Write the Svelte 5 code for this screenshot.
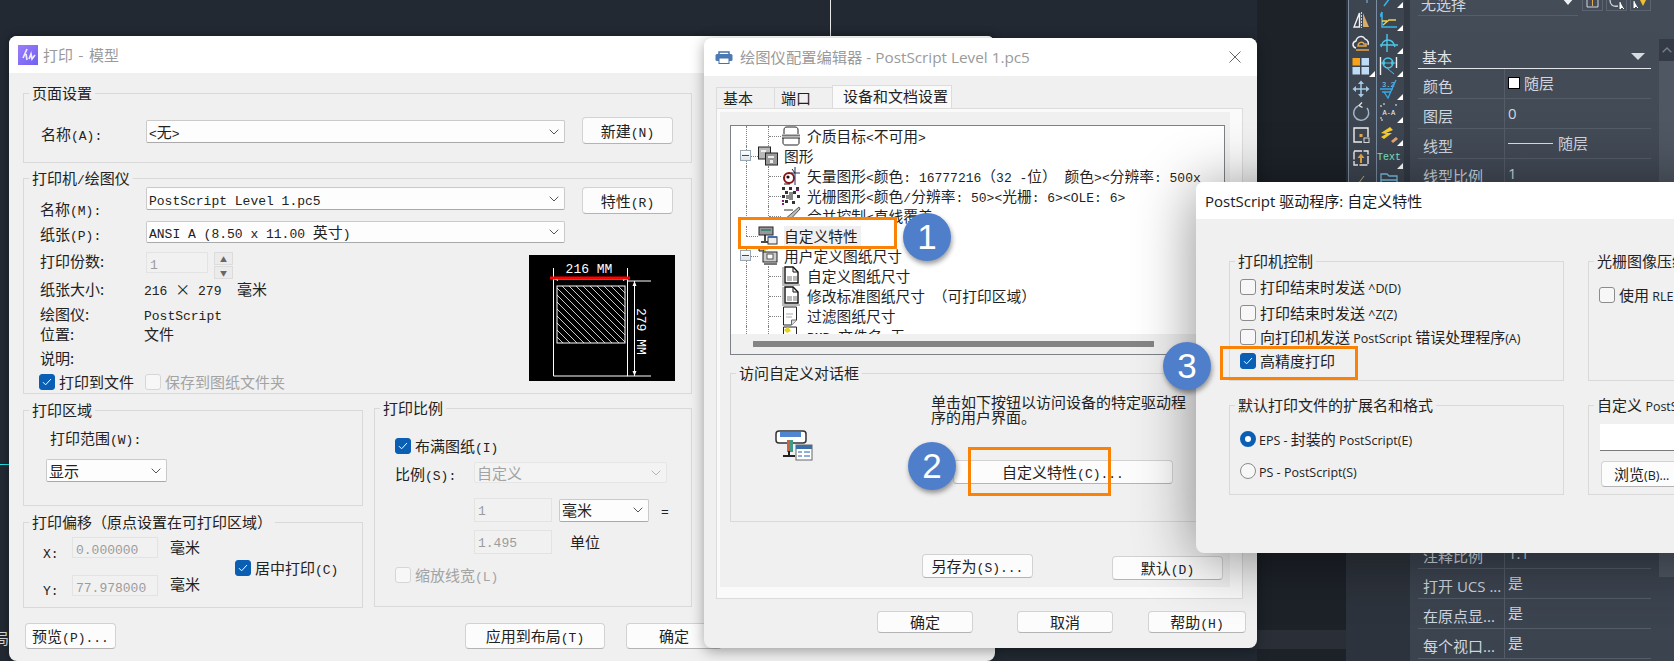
<script>
	const treeRows = [
		{ level: 2, icon: 'media', text: '介质目标<不可用>' },
		{ level: 1, icon: 'graphics', text: '图形', box: true },
		{ level: 2, icon: 'vector', text: '矢量图形<颜色: 16777216（32 -位） 颜色><分辨率: 500x' },
		{ level: 2, icon: 'raster', text: '光栅图形<颜色/分辨率: 50><光栅: 6><OLE: 6>' },
		{ level: 2, icon: 'merge', text: '合并控制<直线覆盖>' },
		{ level: 1, icon: 'custom', text: '自定义特性', current: true },
		{ level: 1, icon: 'userpaper', text: '用户定义图纸尺寸', box: true },
		{ level: 2, icon: 'page', text: '自定义图纸尺寸' },
		{ level: 2, icon: 'page', text: '修改标准图纸尺寸 （可打印区域）' },
		{ level: 2, icon: 'filter', text: '过滤图纸尺寸' },
		{ level: 2, icon: 'pmp', text: 'PMP 文件名<无>' }
	];

	const topProps = [
		{ name: '图层', value: '0' },
		{ name: '线型', value: '随层', line: true },
		{ name: '线型比例', value: '1' }
	];
	const lowerProps = [
		{ name: '注释比例', value: '1:1' },
		{ name: '打开 UCS ...', value: '是' },
		{ name: '在原点显...', value: '是' },
		{ name: '每个视口...', value: '是' }
	];

	const runs = (s) => s.match(/[\x20-\x7e]+|[^\x20-\x7e]+/g) ?? [];
	const isLatin = (r) => /^[\x20-\x7e]/.test(r);
</script>

{#snippet t(s, cls = 'm')}{#each runs(s) as r}{#if isLatin(r)}<span class={cls}>{r}</span>{:else}{r}{/if}{/each}{/snippet}

{#snippet chevron()}
	<svg class="chev" width="10" height="6" viewBox="0 0 10 6"><path d="M.7.7 5 5 9.3.7" fill="none" stroke="currentColor" /></svg>
{/snippet}

{#snippet check(label, state, cls = 'm')}
	<span class="check" class:dim={state === 'off-dim'}>
		<span class="box" class:on={state === 'on'} class:boxdim={state === 'off-dim'}>
			{#if state === 'on'}
				<svg width="10" height="8" viewBox="0 0 10 8"><path d="M1 4.2 3.6 6.8 9 1" fill="none" stroke="#fff" /></svg>
			{/if}
		</span>
		<span>{@render t(label, cls)}</span>
	</span>
{/snippet}

{#snippet treeIcon(name)}
	<svg width="20" height="20" viewBox="0 0 20 20">
		{#if name === 'media'}
			<path d="M3 8V4c0-2 1-3 3-3h8c2 0 3 1 3 3v4" fill="#fff" stroke="#222" />
			<path d="M1 9.500h18" stroke="#777" stroke-width="2" />
			<path d="M1 12h18M2 12v5c0 1 1 2 2 2h12c1 0 2-1 2-2v-5" fill="#fff" stroke="#222" />
		{:else if name === 'graphics'}
			<rect x="0.500" y="1" width="12" height="12" fill="#b8b8b8" stroke="#222" />
			<rect x="7.500" y="7" width="12" height="12" fill="#999" stroke="#222" />
			<path d="M3 4h5v2H3zM10 10h6v2h-6zM12 14h3v3h-3z" fill="#eee" />
		{:else if name === 'vector'}
			<circle cx="8" cy="12" r="5" fill="#fff" stroke="#8a1414" stroke-width="2" />
			<circle cx="7" cy="11" r="1.600" fill="#111" />
			<path d="M14 1v18M10 7h9" stroke="#1c2a6a" />
			<path d="M11 3l3 4M3 18l6 0" stroke="#222" />
		{:else if name === 'raster'}
			<path d="M1 1h3v3H1zM8 1h3v3H8zM15 1h3v3h-3zM4 5h3v3H4zM12 5h3v3h-3zM1 9h3v3H1zM16 9h3v3h-3zM4 14h3v3H4zM11 15h3v3h-3z" fill="#333" />
			<path d="M8 6h4v8H8zM5 9h3v4H5z" fill="#888" />
			<path d="M1 14h2v2H1zM15 3h3v2h-3zM1 17h2v2H1z" fill="#7c1a7c" />
		{:else if name === 'merge'}
			<path d="M18 1 3 14l-1 5 4-2L19 3z" fill="#bbb" stroke="#555" />
			<path d="M3 4h9" stroke="#333" />
		{:else if name === 'custom'}
			<rect x="1" y="1" width="14" height="8" fill="#999" stroke="#222" />
			<path d="M3 4h10" stroke="#2b7f70" stroke-width="1.500" />
			<path d="M7 9v6M3 16h9" stroke="#111" stroke-width="1.500" />
			<rect x="10" y="11" width="9" height="7" fill="#eee" stroke="#333" />
			<path d="M10 11h9" stroke="#2d63b8" stroke-width="1.500" />
		{:else if name === 'userpaper'}
			<path d="M1 2h5v3H1z" fill="#bbb" stroke="#222" />
			<path d="M7 1v5M5 3h5" stroke="#e0c91c" stroke-width="1.500" />
			<rect x="5" y="6" width="14" height="10" fill="#ccc" stroke="#222" />
			<rect x="9" y="8" width="6" height="5" fill="#fff" stroke="#555" />
			<path d="M6 18h13" stroke="#777" stroke-width="2" />
		{:else if name === 'page'}
			<path d="M1 1h2v19H1zM1 18h18v2H1z" fill="#bbb" />
			<path d="M4 1h8l5 5v11H4z" fill="#fff" stroke="#111" stroke-width="1.400" />
			<path d="M6 10h5v5H6zM12 10h4v5h-4z" fill="#bbb" />
			<path d="M12 1v5h5" fill="none" stroke="#111" />
		{:else if name === 'filter'}
			<path d="M2.500 1h13v13l-5 5h-8z" fill="#fff" stroke="#222" />
			<path d="M5 8h7M5 11h6" stroke="#aaa" />
			<path d="M15.500 14h-5v5" fill="#ddd" stroke="#666" />
		{:else}
			<path d="M2.500 1h13v18h-13z" fill="#fff" stroke="#222" />
			<path d="M3 4l4-3 3 4-4 2z" fill="#e8d21c" />
		{/if}
	</svg>
{/snippet}

<div class="desk">
	<div class="canvas">
		<i class="axis-v"></i>
		<i class="axis-h"></i>
		<span class="cut-text">局1</span>
		<i class="canvas-strip"></i>
	</div>

	<div class="rail">
		<div class="toolbars">
			<div class="tool-col">
				<div class="tool"><svg width="20" height="20" viewBox="0 0 20 20"><path d="M2 8h14" stroke="#7fc4ee" stroke-width="1.500" /><path d="M3 3h13v13" fill="none" stroke="#7fc4ee" /></svg></div>
				<div class="tool"><svg width="20" height="20" viewBox="0 0 20 20"><path d="M8.500 3 3 17h5.500z" fill="none" stroke="#f1f1f1" stroke-width="1.400" /><path d="M10.500 2v16" stroke="#cfd5dc" stroke-dasharray="2 1" /><path d="M12 3l6 14h-6z" fill="#d8ab68" /></svg></div>
				<div class="tool"><svg width="20" height="20" viewBox="0 0 20 20"><path d="M5 15c-4-1-4-6 0-7 1-5 7-6 9-2 3 1 4 4 3 6" fill="none" stroke="#f1f1f1" stroke-width="1.500" /><path d="M7 13c0-4 5-5 6-2h2v2H7zM5 17h13" fill="none" stroke="#e5a748" stroke-width="1.500" /></svg></div>
				<div class="tool mark"><svg width="20" height="20" viewBox="0 0 20 20"><rect x="1.500" y="2" width="7.500" height="7.500" fill="#f7a21b" /><rect x="10.500" y="2" width="7.500" height="7.500" fill="#bfdcf7" /><rect x="1.500" y="11" width="7.500" height="7.500" fill="#bfdcf7" /><rect x="10.500" y="11" width="7.500" height="7.500" fill="#bfdcf7" /></svg></div>
				<div class="tool"><svg width="20" height="20" viewBox="0 0 20 20"><path d="M10 3v14M3 10h14" stroke="#a5cbe6" stroke-width="1.500" /><path d="M7 5l3-3.500L13 5zM7 15l3 3.500 3-3.500zM5 7l-3.500 3L5 13zM15 7l3.500 3-3.500 3z" fill="#a5cbe6" /></svg></div>
				<div class="tool"><svg width="20" height="20" viewBox="0 0 20 20"><path d="M7 4a7.500 7.500 0 1 0 9 2" fill="none" stroke="#a3b6c8" stroke-width="1.500" /><path d="M11 .5 8 3.500l3.500 2" fill="none" stroke="#dce4ea" stroke-width="1.400" /></svg></div>
				<div class="tool"><svg width="20" height="20" viewBox="0 0 20 20"><path d="M11 17H3V3h14v9" fill="none" stroke="#f1f1f1" stroke-width="1.400" /><rect x="8.500" y="9" width="3" height="3" fill="#e7a94a" /><rect x="13" y="13" width="5" height="4.500" fill="none" stroke="#ddd" /></svg></div>
				<div class="tool"><svg width="20" height="20" viewBox="0 0 20 20"><path d="M3 3h14v14H3z" fill="none" stroke="#f1f1f1" stroke-width="1.400" stroke-dasharray="8 1.500" /><path d="M10 15V9" stroke="#e7a94a" stroke-width="2" /><path d="M6.500 10 10 5.500l3.500 4.500z" fill="#e7a94a" /></svg></div>
				<div class="tool"><svg width="20" height="20" viewBox="0 0 20 20"><path d="M1 13h5" stroke="#b9c3ce" stroke-dasharray="1 1" /><path d="M7 13l6-8M8 13h10" stroke="#c9b48a" /></svg></div>
			</div>
			<div class="tool-col">
				<div class="tool mark"><svg width="20" height="20" viewBox="0 0 20 20"><path d="M5 19 16 4" stroke="#39b5ea" stroke-width="1.500" /></svg></div>
				<div class="tool mark"><svg width="20" height="20" viewBox="0 0 20 20"><path d="M3 2v15h15M3 6H1M3 2 1.500 5" fill="none" stroke="#39b5ea" stroke-width="1.500" /><path d="M4 15l6-5h7M3 11h5" fill="none" stroke="#ecd24e" stroke-width="1.300" /></svg></div>
				<div class="tool mark"><svg width="20" height="20" viewBox="0 0 20 20"><path d="M8 1v18M1 12h18" stroke="#4cc6e8" stroke-width="1.400" /><path d="M2 14C3 9 6 7 9 7c4 0 6 3 7 7" fill="none" stroke="#4cc6e8" stroke-width="1.300" /></svg></div>
				<div class="tool mark"><svg width="20" height="20" viewBox="0 0 20 20"><path d="M1.500 1v18M17.500 1v11" stroke="#f1f1f1" stroke-width="1.400" /><circle cx="9" cy="7" r="5" fill="none" stroke="#4cc6e8" stroke-width="1.400" /><path d="M2 7h15M6 10.500l9 7.500" stroke="#4cc6e8" /><path d="M6 5v4l-3-2zM12 5v4l3-2z" fill="#4cc6e8" /></svg></div>
				<div class="tool mark"><svg width="20" height="20" viewBox="0 0 20 20"><text x="3" y="8" class="tiny" fill="#7fd0f2">3.2</text><path d="M1 10h13M3 13h9M5 13l4 6 8-18" fill="none" stroke="#35a9ea" stroke-width="1.300" /></svg></div>
				<div class="tool mark"><svg width="20" height="20" viewBox="0 0 20 20"><text x="3.500" y="12.500" class="tiny" fill="#f1f1f1">A-A</text><path d="M4 2h3M2 5V2M2 15v3h3M17 2v3" fill="none" stroke="#f1f1f1" stroke-dasharray="2 1" /></svg></div>
				<div class="tool mark"><svg width="20" height="20" viewBox="0 0 20 20"><path d="M2 8 11 2l3 3-7 3 6 0-8 6-3-2 5-3z" fill="#f4cc2e" /><path d="M12 16l5-4 2 2-5 4z" fill="#e6a46a" /></svg></div>
				<div class="tool mark"><span class="tool-text">Text</span></div>
				<div class="tool"><svg width="20" height="20" viewBox="0 0 20 20"><path d="M2 8V3h6l2 2h8v14H2zM2 9h16M6 13h8v6H6z" fill="none" stroke="#7cc2e8" stroke-width="1.300" /></svg></div>
			</div>
			<i class="toolbar-gap"></i>
		</div>
	</div>

	<div class="panel">
		<div class="props">
			<div class="sel-row">
				<div class="sel-box">
					<span>无选择</span>
					<svg width="12" height="7" viewBox="0 0 12 7"><path d="M0 0h12L6 7z" fill="#eef1f4" /></svg>
				</div>
				<span class="sel-btn"><svg width="19" height="10" viewBox="0 0 19 10"><path d="M4 0v7h11V0M9.500 0v6" fill="none" stroke="#cfd6df" /><path d="M9.500 0v6" stroke="#e7a94a" /></svg></span>
				<span class="sel-btn"><svg width="19" height="10" viewBox="0 0 19 10"><path d="M3 0c0 5 3 7 8 6" fill="none" stroke="#cfd6df" stroke-width="1.300" /><path d="M13 2v7l2-2 2 2" fill="#fff" stroke="#fff" /></svg></span>
				<span class="sel-btn"><svg width="19" height="10" viewBox="0 0 19 10"><path d="M3 1v7l2-2 2 2" fill="#fff" stroke="#fff" /><path d="M9 0h6l-3 6z" fill="#f0c030" /></svg></span>
			</div>
			<div class="sect-head">
				<span>基本</span>
				<svg width="14" height="7" viewBox="0 0 14 7"><path d="M0 0h14L7 7z" fill="#d7dce2" /></svg>
			</div>
			<div class="prop">
				<span class="pname">颜色</span>
				<span class="pval"><i class="swatch"></i>随层</span>
			</div>
			{#each topProps as p}
				<div class="prop">
					<span class="pname">{p.name}</span>
					<span class="pval">
						{#if p.line}<i class="dash"></i>{/if}{p.value}
					</span>
				</div>
			{/each}
			<div class="prop-gap"></div>
			{#each lowerProps as p}
				<div class="prop">
					<span class="pname">{p.name}</span>
					<span class="pval">{p.value}</span>
				</div>
			{/each}
		</div>
		<div class="vscroll">
			<div class="vscroll-up"><svg width="10" height="6" viewBox="0 0 10 6"><path d="M.7 5.300 5 1l4.300 4.300" fill="none" stroke="#78808c" stroke-width="1.300" /></svg></div>
			<div class="vscroll-thumb"></div>
		</div>
	</div>

	<section class="win plot">
		<header class="title">
			<svg class="logo" width="20" height="20" viewBox="0 0 20 20">
				<defs><linearGradient id="logofill" x1="0" y1="0" x2="1" y2="1"><stop offset="0" stop-color="#9b7dfb" /><stop offset="1" stop-color="#6f62f0" /></linearGradient></defs>
				<rect width="20" height="20" fill="url(#logofill)" />
				<path d="M9 4 5 13M8 9l1 6M11 14l2-5 1 5 3-4" fill="none" stroke="#f1ecff" stroke-width="1.700" />
			</svg>
			<span class="title-text plot-title">打印 - 模型</span>
		</header>
		<div class="plot-body">
			<div class="group page-group">
				<span class="legend">页面设置</span>
				<div class="row">
					<span class="lbl" style="margin-top:7px">{@render t('名称(A):')}</span>
					<div class="select" style="width:419px;margin-top:3px"><span>{@render t('<无>')}</span>{@render chevron()}</div>
					<button class="btn" style="width:91px;height:27px;margin-left:17px">{@render t('新建(N)')}</button>
				</div>
			</div>

			<div class="group printer-group">
				<span class="legend">{@render t('打印机/绘图仪')}</span>
				<div class="row" style="height:34px">
					<span class="lbl" style="margin-top:12px;width:106px">{@render t('名称(M):')}</span>
					<div class="select" style="width:419px"><span>{@render t('PostScript Level 1.pc5')}</span>{@render chevron()}</div>
					<button class="btn" style="width:91px;height:27px;margin-left:17px">{@render t('特性(R)')}</button>
				</div>
				<div class="row" style="height:31px">
					<span class="lbl" style="margin-top:3px;width:106px">{@render t('纸张(P):')}</span>
					<div class="select" style="width:419px;height:22px"><span>{@render t('ANSI A (8.50 x 11.00 英寸)')}</span>{@render chevron()}</div>
				</div>
				<div class="printer-lower">
					<div class="info">
						<span class="info-l" style="margin-top:-1px">打印份数:</span>
						<div class="copies">
							<span class="field" style="width:62px;height:21px">{@render t('1')}</span>
							<span class="spin"><i>▲</i><i>▼</i></span>
						</div>
						<span class="info-l">纸张大小:</span>
						<span>{@render t('216 ')}×{@render t(' 279  ')}毫米</span>
						<span class="info-l">绘图仪:</span>
						<span>{@render t('PostScript')}</span>
						<span class="info-l">位置:</span>
						<span>文件</span>
						<span class="info-l">说明:</span>
						<span></span>
						<div class="info-checks">
							<div class="w106">{@render check('打印到文件', 'on')}</div>
							{@render check('保存到图纸文件夹', 'off-dim')}
						</div>
					</div>
					<svg class="preview" width="146" height="126" viewBox="0 0 146 126">
						<rect width="146" height="126" fill="#000" />
						<path d="M24.500 13v15M98.500 13v15M25 24h73M24.500 26V121H98.500V26M98 26h24M98 121h24M105.500 26v95" fill="none" stroke="#fff" />
						<path d="M25 24l4-2v4zM98 24l-4-2v4zM105.500 26l-2 5h4zM105.500 121l-2-5h4z" fill="#fff" />
						<rect x="21" y="21.500" width="80" height="3" fill="#f00" />
						<clipPath id="hatchclip"><rect x="28" y="31" width="68" height="57" /></clipPath>
						<g clip-path="url(#hatchclip)" stroke="#fff" stroke-width="0.800">
							{#each Array(20) as _, i}
								<path d="M{i * 7 - 44} 31l68 68" />
							{/each}
						</g>
						<rect x="28" y="31" width="68" height="57" fill="none" stroke="#fff" />
						<text x="60" y="18" text-anchor="middle" class="pv-text">216 MM</text>
						<text transform="translate(108 53) rotate(90)" class="pv-text">279 MM</text>
					</svg>
				</div>
			</div>

			<div class="lower">
				<div class="lower-left">
					<div class="group area-group">
						<span class="legend">打印区域</span>
						<span class="lbl area-lbl">{@render t('打印范围(W):')}</span>
						<div class="select area-sel" style="width:121px"><span>显示</span>{@render chevron()}</div>
					</div>
					<div class="group offset-group">
						<span class="legend">打印偏移（原点设置在可打印区域）</span>
						<div class="offset-grid">
							<span style="margin-top:5px">{@render t('X:')}</span>
							<span class="field" style="height:21px">{@render t('0.000000')}</span>
							<span style="margin-left:12px">毫米</span>
							<span class="center-check">{@render check('居中打印(C)', 'on')}</span>
							<span style="margin-top:4px">{@render t('Y:')}</span>
							<span class="field" style="height:21px">{@render t('77.978000')}</span>
							<span style="margin:-1px 0 0 12px">毫米</span>
						</div>
					</div>
				</div>
				<div class="group scale-group">
					<span class="legend">打印比例</span>
					{@render check('布满图纸(I)', 'on')}
					<div class="row" style="margin-top:6px">
						<span class="lbl" style="width:79px;line-height:24px">{@render t('比例(S):')}</span>
						<div class="select sel-dim" style="width:193px;height:21px"><span>自定义</span>{@render chevron()}</div>
					</div>
					<div class="units">
						<div class="row" style="align-items:center">
							<span class="field" style="width:78px;height:24px">{@render t('1')}</span>
							<div class="select" style="width:90px;margin-left:7px"><span>毫米</span>{@render chevron()}</div>
							<span style="margin-left:12px">{@render t('=')}</span>
						</div>
						<div class="row" style="margin-top:8px;align-items:center">
							<span class="field" style="width:78px;height:24px">{@render t('1.495')}</span>
							<span style="margin-left:18px">单位</span>
						</div>
					</div>
					<div style="margin-top:11px">{@render check('缩放线宽(L)', 'off-dim')}</div>
				</div>
			</div>

			<div class="plot-foot">
				<button class="btn" style="width:91px;height:26px">{@render t('预览(P)...')}</button>
				<button class="btn" style="width:140px;height:26px;margin-left:349px">{@render t('应用到布局(T)')}</button>
				<button class="btn" style="width:96px;height:26px;margin-left:21px">确定</button>
			</div>
		</div>
	</section>

	<section class="win editor">
		<header class="title">
			<svg class="logo-small" width="18" height="13" viewBox="0 0 18 13"><path d="M4 3V1h10v2" fill="none" stroke="#4672a8" stroke-width="1.500" /><rect x="0.500" y="3" width="17" height="7" rx="1.500" fill="#4c7bb3" /><rect x="4" y="7" width="10" height="5.500" fill="#fff" stroke="#4672a8" /></svg>
			<span class="title-text sans">绘图仪配置编辑器 - PostScript Level 1.pc5</span>
			<svg class="close" width="12" height="12" viewBox="0 0 12 12"><path d="M.5.5l11 11M11.500.5l-11 11" stroke="#666" /></svg>
		</header>
		<div class="editor-body">
			<div class="tabs">
				<span class="tab">基本</span>
				<span class="tab">端口</span>
				<span class="tab active">设备和文档设置</span>
			</div>
			<div class="tab-panel">
				<div class="tab-inner">
					<div class="tree">
						<div class="tree-rows">
							{#each treeRows as row}
								<div class="tree-row" class:lv2={row.level === 2} class:current={row.current}>
									<i class="vl"></i>
									{#if row.level === 2}<i class="vl2"></i>{/if}
									<i class="hl"></i>
									{#if row.box}<i class="minus"></i>{/if}
									<span class="ticon">{@render treeIcon(row.icon)}</span>
									<span class="tlabel">{@render t(row.text)}</span>
								</div>
							{/each}
						</div>
						<div class="tree-hscroll"><i></i></div>
					</div>
					<div class="group access-group">
						<span class="legend">访问自定义对话框</span>
						<div class="access-grid">
							<svg class="big-printer" width="38" height="32" viewBox="0 0 38 32">
								<rect x="1" y="2" width="30" height="12" rx="3" fill="#fff" stroke="#333" stroke-width="1.500" />
								<rect x="5" y="3" width="21" height="5" fill="#4f86cf" />
								<rect x="12" y="11" width="6" height="12" fill="#3f9c86" />
								<rect x="12" y="11" width="2" height="12" fill="#d1603d" />
								<path d="M8 27h12M14 22v5" stroke="#222" stroke-width="2" />
								<rect x="21" y="16" width="16" height="15" fill="#fff" stroke="#666" />
								<rect x="21" y="16" width="16" height="4" fill="#3a6ea8" />
								<path d="M23 23h4M29 23h6M23 27h4M29 27h6" stroke="#6b94c7" stroke-width="1.500" />
							</svg>
							<div class="access-right">
								<p>单击如下按钮以访问设备的特定驱动程序的用户界面。</p>
								<button class="btn" style="width:220px;height:24px;margin:36px 0 0 22px">{@render t('自定义特性(C)...')}</button>
							</div>
						</div>
					</div>
					<div class="inner-foot">
						<button class="btn" style="width:111px;height:24px">{@render t('另存为(S)...')}</button>
						<button class="btn" style="width:111px;height:24px;margin:2px 0 0 79px">{@render t('默认(D)')}</button>
					</div>
				</div>
			</div>
			<div class="editor-foot">
				<button class="btn" style="width:96px;height:22px">确定</button>
				<button class="btn" style="width:96px;height:22px;margin-left:44px">取消</button>
				<button class="btn" style="width:98px;height:22px;margin-left:35px">{@render t('帮助(H)')}</button>
			</div>
		</div>
	</section>

	<section class="win driver">
		<header class="title">
			<span class="title-text sans dark">PostScript 驱动程序: 自定义特性</span>
		</header>
		<div class="driver-body">
			<div class="group">
				<span class="legend">打印机控制</span>
				<div class="driver-checks">
					{@render check('打印结束时发送 ^D(D)', 'off', 's')}
					{@render check('打印结束时发送 ^Z(Z)', 'off', 's')}
					{@render check('向打印机发送 PostScript 错误处理程序(A)', 'off', 's')}
					{@render check('高精度打印', 'on', 's')}
				</div>
			</div>
			<div class="group">
				<span class="legend">光栅图像压缩</span>
				<div class="rle">{@render check('使用 RLE 压缩', 'off', 's')}</div>
			</div>
			<div class="group">
				<span class="legend">默认打印文件的扩展名和格式</span>
				<div class="radios">
					<span class="radio-row"><i class="radio on"></i><span>{@render t('EPS - 封装的 PostScript(E)', 's')}</span></span>
					<span class="radio-row"><i class="radio"></i><span>{@render t('PS - PostScript(S)', 's')}</span></span>
				</div>
			</div>
			<div class="group">
				<span class="legend">自定义 <span class="s">PostScript</span></span>
				<div class="ps-input"></div>
				<button class="btn ps-browse">浏览<span class="s">(B)...</span></button>
			</div>
		</div>
	</section>

	<i class="callout" style="left:738px;top:217px;width:159px;height:32px"></i>
	<i class="callout" style="left:968px;top:447px;width:143px;height:49px"></i>
	<i class="callout" style="left:1220px;top:346px;width:138px;height:34px"></i>
	<span class="badge" style="left:903px;top:213px">1</span>
	<span class="badge" style="left:908px;top:442px">2</span>
	<span class="badge" style="left:1163px;top:342px">3</span>
</div>

<style>
	:global(body) {
		margin: 0;
		background: #222932;
	}

	.desk {
		position: relative;
		display: flex;
		width: 1674px;
		height: 661px;
		overflow: hidden;
		font-family: "Noto Sans CJK SC", sans-serif;
		font-size: 15px;
		line-height: 20px;
		color: #222;
		background: #222932;
	}

	.m {
		font-family: "Liberation Mono", monospace;
		font-size: 13px;
		line-height: 1;
		white-space: pre;
	}

	.s {
		font-family: "Open Sans", sans-serif;
		font-size: 12.500px;
		line-height: 1;
		white-space: pre;
	}

	/* drawing area behind the dialogs */
	.canvas {
		position: relative;
		width: 1346px;
		flex-shrink: 0;
		background: linear-gradient(to right, #222932 1257px, #1d2229 1257px);
	}

	.axis-v {
		position: absolute;
		left: 830px;
		top: 0;
		width: 1px;
		height: 40px;
		background: #e8e8e8;
	}

	.axis-h {
		position: absolute;
		left: 0;
		top: 464px;
		width: 10px;
		height: 1px;
		background: #20e0e0;
	}

	.cut-text {
		position: absolute;
		left: -6px;
		top: 628px;
		color: #d8d8d8;
	}

	.canvas-strip {
		position: absolute;
		left: 1250px;
		top: 630px;
		width: 96px;
		height: 19px;
		background: #2a2f37;
	}

	.rail {
		width: 64px;
		flex-shrink: 0;
		background: #2d333c;
	}

	.toolbars {
		display: flex;
		height: 182px;
		padding-left: 2px;
		overflow: hidden;
	}

	.toolbar-gap {
		width: 6px;
		background: #333a44;
		flex-shrink: 0;
	}

	.tool-col {
		width: 27px;
		margin-top: -15px;
		border-left: 1px solid #7a8da3;
		background: #3d4551;
	}

	.tool {
		position: relative;
		display: flex;
		align-items: center;
		justify-content: center;
		height: 23px;
		padding-right: 3px;
	}

	.tool.mark::after {
		content: '';
		position: absolute;
		right: 1px;
		bottom: 0;
		border-left: 6px solid transparent;
		border-bottom: 6px solid #fff;
	}

	.tiny {
		font-family: "Liberation Mono", monospace;
		font-size: 7px;
	}

	.tool-text {
		font-family: "Liberation Mono", monospace;
		font-size: 10px;
		color: #7ee8c4;
	}

	.panel {
		display: flex;
		flex: 1;
		background: linear-gradient(#444c58, #3b434f);
		color: #cfd6df;
	}

	.props {
		width: 249px;
		box-sizing: border-box;
		padding: 0 8px;
		flex-shrink: 0;
	}

	.sel-row {
		display: flex;
		gap: 3px;
		height: 16px;
		align-items: flex-start;
	}

	.sel-box {
		display: flex;
		align-items: center;
		justify-content: space-between;
		width: 187px;
		height: 16px;
		padding: 0 4px 0 3px;
		box-sizing: border-box;
		border-bottom: 1px solid #565e6a;
		margin-right: 1px;
	}

	.sel-box span {
		margin-top: -7px;
	}

	.sel-box svg {
		margin-top: -12px;
	}

	.sel-btn {
		display: block;
		width: 19px;
		height: 10px;
		border: 1px solid #5c6471;
		border-top: 0;
		flex-shrink: 0;
	}

	.sel-btn svg {
		display: block;
	}

	.sect-head {
		display: flex;
		align-items: center;
		justify-content: space-between;
		height: 23px;
		margin-top: 29px;
		padding: 0 6px 0 4px;
		border-bottom: 1px solid #e4e7ea;
		box-sizing: content-box;
		color: #e2e6ea;
	}

	.prop {
		display: flex;
		height: 29px;
		border-bottom: 1px solid #545c68;
		line-height: 30px;
	}

	.pname {
		width: 87px;
		padding: 2px 0 0 5px;
		border-right: 1px solid #545c68;
		box-sizing: border-box;
		font-family: "Open Sans", "Noto Sans CJK SC", sans-serif;
		white-space: nowrap;
		overflow: hidden;
	}

	.pval {
		display: flex;
		align-items: center;
		padding-left: 3px;
		margin-top: -1px;
		font-family: "Open Sans", "Noto Sans CJK SC", sans-serif;
	}

	.swatch {
		width: 10px;
		height: 10px;
		margin-right: 4px;
		background: #fff;
		border: 1px solid #000;
	}

	.dash {
		width: 45px;
		height: 1px;
		margin-right: 5px;
		background: #d8dde3;
	}

	.prop-gap {
		height: 350px;
	}

	.vscroll {
		width: 15px;
		margin-top: 39px;
	}

	.vscroll-up {
		display: flex;
		align-items: center;
		justify-content: center;
		height: 22px;
		background: #343b46;
	}

	.vscroll-thumb {
		height: 516px;
		background: #4f5763;
	}

	/* dialogs */
	.win {
		position: absolute;
		display: flex;
		flex-direction: column;
		border-radius: 8px;
		overflow: hidden;
		background: #f0f0f0;
	}

	.title {
		display: flex;
		align-items: center;
		background: #fff;
		flex-shrink: 0;
	}

	.title-text {
		color: #9a9a9a;
		white-space: nowrap;
	}

	.plot-title {
		word-spacing: 2px;
	}

	.title-text.sans {
		font-family: "Open Sans", "Noto Sans CJK SC", sans-serif;
		font-size: 15.300px;
	}

	.title-text.dark {
		color: #1b1b1b;
		font-size: 15px;
	}

	.plot {
		left: 9px;
		top: 36px;
		width: 986px;
		height: 625px;
		box-shadow: 0 0 8px rgba(0, 0, 0, 0.35);
	}

	.plot .title {
		height: 37px;
		padding-left: 9px;
		gap: 5px;
	}

	.plot-body {
		padding: 20px 0 0 14px;
	}

	.group {
		position: relative;
		border: 1px solid #d9d9d9;
		box-sizing: border-box;
	}

	.legend {
		position: absolute;
		left: 5px;
		top: -11px;
		padding: 0 3px;
		background: #f0f0f0;
		white-space: nowrap;
	}

	.row {
		display: flex;
		align-items: flex-start;
	}

	.lbl {
		display: block;
		width: 105px;
		flex-shrink: 0;
	}

	.select {
		display: flex;
		align-items: center;
		justify-content: space-between;
		height: 23px;
		padding: 0 5px 0 2px;
		box-sizing: border-box;
		background: #fdfdfd;
		border: 1px solid #cacaca;
		border-bottom-color: #a9a9a9;
		border-radius: 2px;
		color: #222;
		white-space: pre;
		flex-shrink: 0;
	}

	.chev {
		color: #555;
		flex-shrink: 0;
	}

	.sel-dim {
		background: #f3f3f3;
		border-color: #e6e6e6;
		color: #a3a3a3;
	}

	.sel-dim .chev {
		color: #b5b5b5;
	}

	.btn {
		display: block;
		padding: 0;
		font: inherit;
		color: #222;
		background: #fcfcfc;
		border: 1px solid #d2d2d2;
		border-bottom-color: #b4b4b4;
		border-radius: 4px;
		white-space: pre;
		flex-shrink: 0;
	}

	.field {
		display: block;
		padding-left: 3px;
		box-sizing: border-box;
		background: #f1f1f1;
		border: 1px solid #e3e3e3;
		color: #9c9c9c;
	}

	.page-group {
		width: 669px;
		height: 70px;
		padding: 23px 0 0 17px;
	}

	.printer-group {
		width: 669px;
		height: 216px;
		margin-top: 15px;
		padding: 8px 16px 0 16px;
	}

	.printer-lower {
		display: flex;
		align-items: flex-start;
	}

	.info {
		display: grid;
		grid-template-columns: 104px 1fr;
		grid-template-rows: 27px 25px 20px 24px 24px 20px;
		width: 480px;
		white-space: pre;
	}

	.info-l {
		display: block;
	}

	.copies {
		display: flex;
		align-items: flex-start;
		gap: 6px;
		margin-left: 2px;
	}

	.spin {
		display: flex;
		flex-direction: column;
		gap: 1px;
		width: 19px;
	}

	.spin i {
		display: flex;
		align-items: center;
		justify-content: center;
		height: 11px;
		font-size: 7px;
		font-style: normal;
		color: #666;
		background: #ebebeb;
		border: 1px solid #dcdcdc;
	}

	.info-checks {
		grid-column: 1 / -1;
		display: flex;
		margin-left: -1px;
	}

	.w106 {
		width: 106px;
	}

	.check {
		display: flex;
		align-items: center;
		gap: 4px;
		height: 20px;
		white-space: pre;
	}

	.check.dim {
		color: #a3a3a3;
	}

	.box {
		display: flex;
		align-items: center;
		justify-content: center;
		width: 16px;
		height: 16px;
		box-sizing: border-box;
		background: #f7f7f7;
		border: 1px solid #8c8c8c;
		border-radius: 3px;
		flex-shrink: 0;
	}

	.box.on {
		background: #0a5fb4;
		border-color: #0a5fb4;
	}

	.box.boxdim {
		border-color: #d6d6d6;
	}

	.preview {
		display: block;
		margin: 3px 0 0 auto;
	}

	.pv-text {
		font-family: "Liberation Mono", monospace;
		font-size: 13px;
		fill: #fff;
	}

	.lower {
		display: grid;
		grid-template-columns: 340px 318px;
		gap: 11px;
		margin-top: 14px;
		align-items: start;
	}

	.lower-left {
		padding-top: 2px;
	}

	.area-group {
		height: 96px;
		padding: 17px 0 0 22px;
	}

	.area-lbl {
		padding-left: 4px;
		width: auto;
	}

	.area-sel {
		margin-top: 11px;
	}

	.offset-group {
		height: 86px;
		margin-top: 16px;
		padding: 14px 0 0 19px;
	}

	.offset-grid {
		display: grid;
		grid-template-columns: 29px 86px 77px auto;
		grid-template-rows: 38px 21px;
		white-space: pre;
	}

	.center-check {
		grid-row: 1 / 3;
		grid-column: 4;
		margin-top: 21px;
	}

	.scale-group {
		height: 199px;
		padding: 27px 0 0 20px;
	}

	.units {
		margin: 12px 0 0 79px;
	}

	.plot-foot {
		display: flex;
		margin: 15px 0 0 2px;
	}

	.editor {
		left: 704px;
		top: 38px;
		width: 553px;
		height: 610px;
		box-shadow: 0 3px 14px rgba(0, 0, 0, 0.35);
	}

	.editor .title {
		height: 38px;
		padding-left: 11px;
		gap: 7px;
	}

	.close {
		margin-left: auto;
		margin-right: 16px;
	}

	.editor-body {
		padding: 9px 0 0 12px;
	}

	.tabs {
		display: flex;
		align-items: flex-end;
		height: 23px;
	}

	.tab {
		width: 59px;
		height: 21px;
		padding-left: 6px;
		box-sizing: border-box;
		border: 1px solid #dcdcdc;
		border-bottom: 0;
		margin-right: -1px;
		line-height: 20px;
	}

	.tab.active {
		width: 120px;
		height: 23px;
		padding-left: 10px;
		background: #fafafa;
		line-height: 20px;
	}

	.tab-panel {
		width: 527px;
		height: 491px;
		padding: 3px 12px 11px 3px;
		box-sizing: border-box;
		background: #fafafa;
		border: 1px solid #dcdcdc;
	}

	.tab-inner {
		height: 100%;
		padding: 13px 0 0 10px;
		box-sizing: border-box;
		background: #f0f0f0;
	}

	.tree {
		display: flex;
		flex-direction: column;
		width: 495px;
		height: 230px;
		box-sizing: border-box;
		border: 1px solid #7d8288;
		background: #fff;
	}

	.tree-rows {
		flex: 1;
		min-height: 0;
		overflow: hidden;
		margin-right: 21px;
		font-size: 14.750px;
	}

	.tree-row {
		position: relative;
		display: flex;
		align-items: center;
		height: 20px;
		padding-left: 27px;
		white-space: pre;
		color: #1f1f1f;
	}

	.tree-row.lv2 {
		padding-left: 50px;
	}

	.tree-row.current::before {
		content: '';
		position: absolute;
		left: 8px;
		top: -8px;
		width: 158px;
		height: 8px;
		background: #fff;
	}

	.vl,
	.vl2,
	.hl {
		position: absolute;
		display: block;
	}

	.vl {
		left: 15px;
		top: 0;
		height: 20px;
		border-left: 1px dotted #808080;
	}

	.vl2 {
		left: 37px;
		top: 0;
		height: 20px;
		border-left: 1px dotted #808080;
	}

	.hl {
		left: 20px;
		top: 10px;
		width: 7px;
		border-top: 1px dotted #808080;
	}

	.lv2 .hl {
		left: 38px;
		width: 12px;
	}

	.current .hl {
		left: 15px;
		width: 12px;
	}

	.current .vl {
		height: 10px;
	}

	.minus {
		position: absolute;
		left: 9px;
		top: 4px;
		width: 11px;
		height: 11px;
		box-sizing: border-box;
		border: 1px solid #9aa7b5;
		background: linear-gradient(#fff, #dfe5ea);
	}

	.minus::after {
		content: '';
		position: absolute;
		left: 1px;
		top: 4px;
		width: 7px;
		height: 1px;
		background: #2c4a8c;
	}

	.ticon {
		display: flex;
		width: 26px;
		flex-shrink: 0;
	}

	.tlabel {
		line-height: 20px;
	}

	.current .tlabel {
		background: #f0f0f0;
		padding: 0 3px 0 0;
	}

	.tree-hscroll {
		display: flex;
		align-items: center;
		height: 20px;
		padding-left: 22px;
		background: #f0f0f0;
		flex-shrink: 0;
	}

	.tree-hscroll i {
		width: 401px;
		height: 6px;
		background: #858585;
	}

	.access-group {
		width: 495px;
		height: 149px;
		margin-top: 18px;
	}

	.access-grid {
		display: grid;
		grid-template-columns: 200px 1fr;
	}

	.big-printer {
		display: block;
		margin: 55px 0 0 44px;
	}

	.access-right p {
		width: 256px;
		margin: 20px 0 0;
		line-height: 15px;
	}

	.inner-foot {
		display: flex;
		align-items: flex-start;
		margin: 32px 0 0 192px;
	}

	.editor-foot {
		display: flex;
		margin: 12px 0 0 161px;
	}

	.driver {
		left: 1196px;
		top: 182px;
		width: 620px;
		height: 371px;
		box-shadow: 0 6px 60px rgba(0, 0, 0, 0.45);
	}

	.driver .title {
		height: 37px;
		padding-left: 9px;
	}

	.driver-body {
		display: grid;
		grid-template-columns: 335px 300px;
		grid-template-rows: 120px 90px;
		gap: 24px;
		padding: 42px 0 0 33px;
	}

	.driver-checks {
		display: grid;
		grid-template-rows: 26px 24px 24px 20px;
		padding: 15px 0 0 10px;
	}

	.rle {
		padding: 23px 0 0 10px;
	}

	.radios {
		display: grid;
		grid-template-rows: 32px 20px;
		padding: 23px 0 0 10px;
	}

	.radio-row {
		display: flex;
		align-items: flex-start;
		gap: 3px;
		white-space: pre;
		height: 20px;
	}

	.radio {
		display: block;
		width: 16px;
		height: 16px;
		margin-top: 2px;
		box-sizing: border-box;
		background: #f7f7f7;
		border: 1px solid #8c8c8c;
		border-radius: 50%;
		flex-shrink: 0;
	}

	.radio.on {
		background: #fff;
		border: 5px solid #0a5fb4;
	}

	.ps-input {
		height: 26px;
		margin: 18px 0 0 11px;
		background: #fff;
		border-bottom: 1px solid #7a7a7a;
	}

	.ps-browse {
		width: 100px;
		height: 26px;
		margin: 10px 0 0 12px;
		text-align: left;
		padding-left: 12px;
	}

	/* tutorial annotations on top of the screenshot */
	.callout {
		position: absolute;
		display: block;
		box-sizing: border-box;
		border: 3.5px solid #fa8205;
	}

	.badge {
		position: absolute;
		display: flex;
		align-items: center;
		justify-content: center;
		width: 48px;
		height: 48px;
		border-radius: 50%;
		background: #4f7fca;
		box-shadow: 1px 3px 5px rgba(0, 0, 0, 0.4);
		font-family: "Liberation Sans", sans-serif;
		font-size: 35px;
		color: #fff;
	}
</style>
